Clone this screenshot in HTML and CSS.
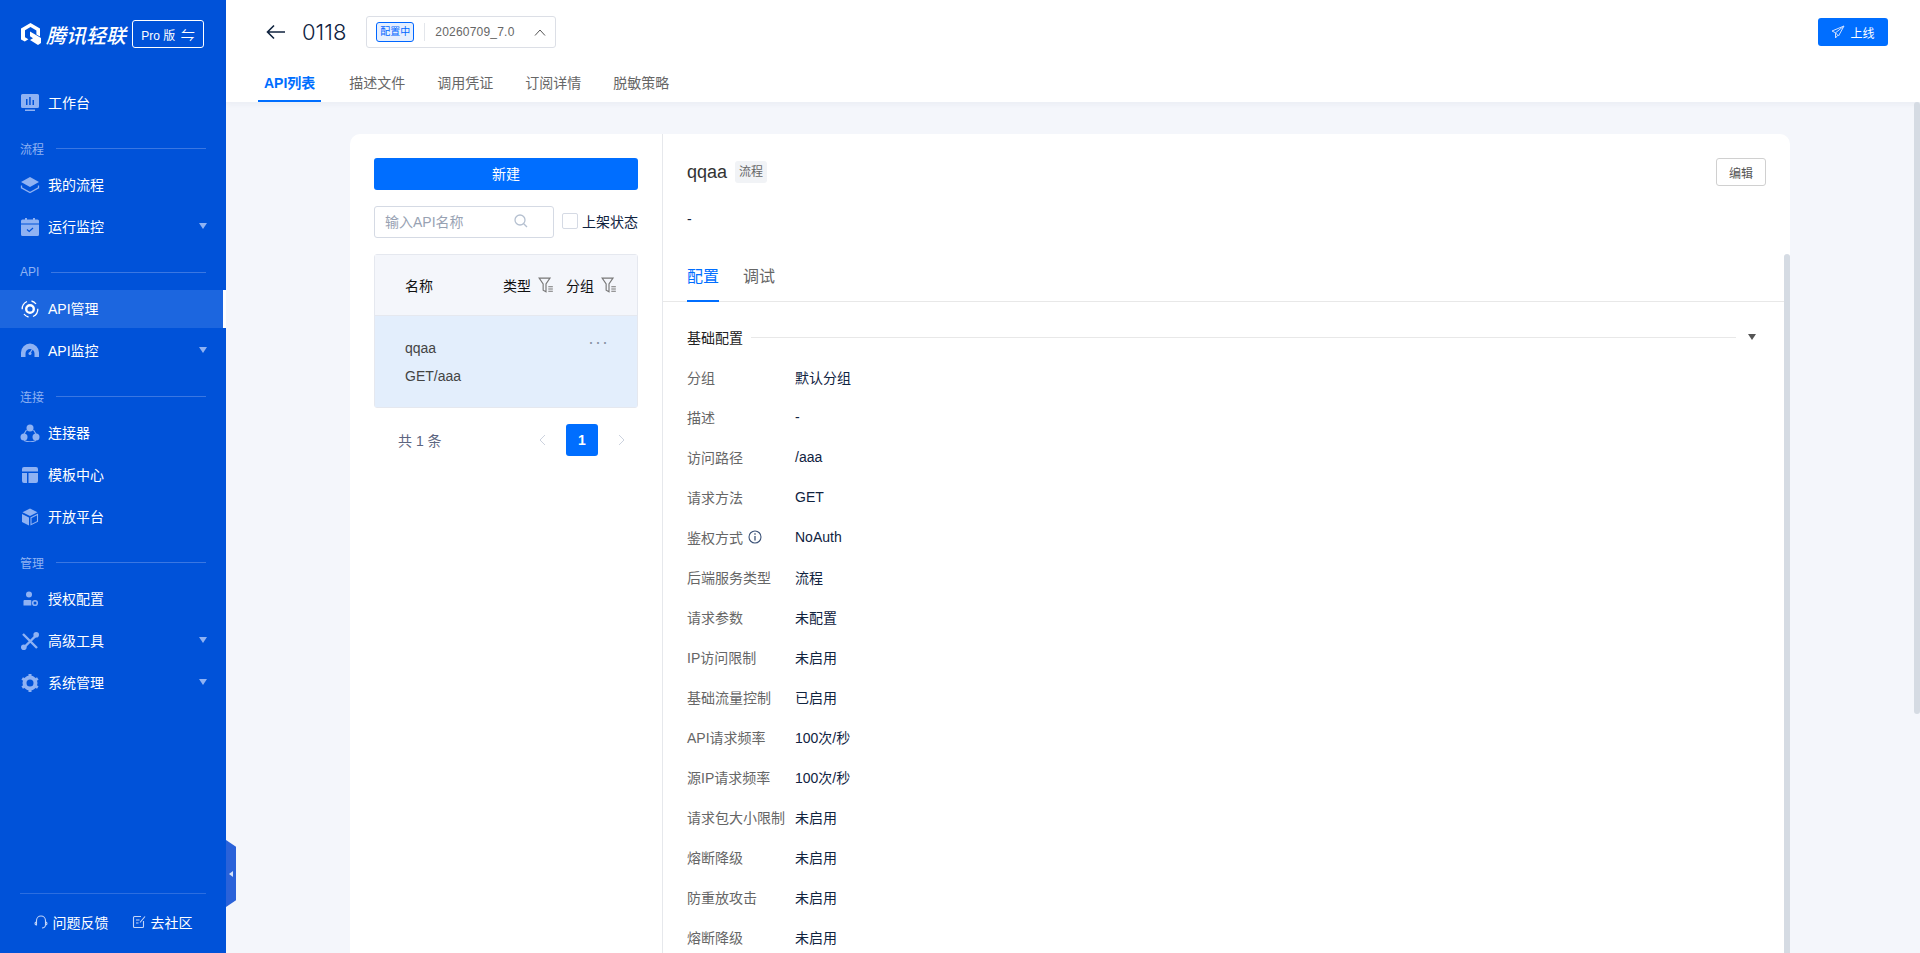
FILE: index.html
```html
<!DOCTYPE html>
<html lang="zh-CN">
<head>
<meta charset="UTF-8">
<title>腾讯轻联</title>
<link rel="stylesheet" href="styles.css">
</head>
<body>
<div class="app">
  <aside class="sidebar">
    <div class="brand">
      <svg class="brand-mark" viewBox="0 0 22 24"><path fill="#fff" d="M10.500 1 20 6.500v8l-3.600-2V8.600L10.500 5 5 8.300v7l3.400 2-3.600 2.200L1 17.400V6.500z"/><path fill="#fff" d="M10 9.500l6 3.500 5 3v5l-3 2-8-5 3-1.800-3-2z"/></svg>
      <span class="brand-name">腾讯轻联</span>
      <button class="pro-btn">Pro 版 <span class="pro-swap">⇋</span></button>
    </div>
    <nav class="nav">
      <a class="nav-item">
        <svg class="nav-icon" viewBox="0 0 18 18"><path fill="#8fb2f3" d="M1.500 0h15A1.500 1.500 0 0 1 18 1.500v11a1.500 1.500 0 0 1-1.500 1.500h-15A1.500 1.500 0 0 1 0 12.500v-11A1.500 1.500 0 0 1 1.500 0zM4 15.500h10V17H4z"/><path fill="#0052d9" d="M5 5h1.500v6H5zM8.200 3h1.500v8H8.200zM11.500 6H13v5h-1.500z"/></svg>
        工作台
      </a>
      <div class="nav-group"><span>流程</span></div>
      <a class="nav-item">
        <svg class="nav-icon" viewBox="0 0 18 18"><path fill="#8fb2f3" d="M9 1 18 6 9 11 0 6z"/><path fill="none" stroke="#8fb2f3" stroke-width="1.300" d="M.5 9.500v2.300L9 16.500l8.500-4.700V9.500"/></svg>
        我的流程
      </a>
      <a class="nav-item">
        <svg class="nav-icon" viewBox="0 0 18 18"><path fill="#8fb2f3" d="M1.500 1.500H4V0h2v1.500h6V0h2v1.500h2.500A1.500 1.500 0 0 1 18 3v13.500a1.500 1.500 0 0 1-1.500 1.500h-15A1.500 1.500 0 0 1 0 16.500V3a1.500 1.500 0 0 1 1.500-1.500z"/><path fill="none" stroke="#0052d9" stroke-width="1.200" d="M0 6h18M6 11.500l2.200 2L12 10"/></svg>
        运行监控
        <i class="caret"></i>
      </a>
      <div class="nav-group"><span>API</span></div>
      <a class="nav-item active">
        <svg class="nav-icon" viewBox="0 0 18 18"><circle cx="9" cy="9" r="3.800" fill="none" stroke="#fff" stroke-width="2.400"/><path fill="none" stroke="#fff" stroke-width="1.300" d="M6 1.500C2.800 3 1 6 1.200 9.300M12 16.500c3.200-1.500 5-4.500 4.800-7.800M7.500 17C5.500 16.500 4 15.500 3 14M10.500 1c2 .4 3.500 1.500 4.500 3"/></svg>
        API管理
      </a>
      <a class="nav-item">
        <svg class="nav-icon" viewBox="0 0 18 18"><path fill="#8fb2f3" d="M9 1.500a9 9 0 0 1 9 9V15h-4.500v-3.500a4.500 4.500 0 1 0-9 0V15H0v-4.500a9 9 0 0 1 9-9z"/><path fill="none" stroke="#8fb2f3" stroke-width="1.300" d="M9 11l2.500-4"/><circle cx="9" cy="11.500" r="1.500" fill="#8fb2f3"/></svg>
        API监控
        <i class="caret"></i>
      </a>
      <div class="nav-group"><span>连接</span></div>
      <a class="nav-item">
        <svg class="nav-icon" viewBox="0 0 20 18"><circle cx="10" cy="4" r="3.500" fill="#8fb2f3"/><circle cx="4" cy="13" r="3.500" fill="#8fb2f3"/><circle cx="16" cy="13" r="3.500" fill="#8fb2f3"/><path fill="none" stroke="#8fb2f3" stroke-width="1.100" d="M6.500 6 4 10M13.500 6l2.500 4M4 16.500c3.500 1.500 8.500 1.500 12 0"/></svg>
        连接器
      </a>
      <a class="nav-item">
        <svg class="nav-icon" viewBox="0 0 18 18"><path fill="#8fb2f3" d="M3 1h12A2 2 0 0 1 17 3v2.500H1V3a2 2 0 0 1 2-2zM1 7h5v10H3a2 2 0 0 1-2-2zM7.500 7H17v8a2 2 0 0 1-2 2H7.500z"/></svg>
        模板中心
      </a>
      <a class="nav-item">
        <svg class="nav-icon" viewBox="0 0 18 18"><path fill="#8fb2f3" d="M9 .5l7.500 3.800L9 8 1.500 4.300zM1 6l7 3.500V17.500L1 14z"/><path fill="none" stroke="#8fb2f3" stroke-width="1.100" d="M10 9.800l6.500-3.300v7L10 16.700z"/></svg>
        开放平台
      </a>
      <div class="nav-group"><span>管理</span></div>
      <a class="nav-item">
        <svg class="nav-icon" viewBox="0 0 18 18"><circle cx="8" cy="4.500" r="3" fill="#8fb2f3"/><path fill="#8fb2f3" d="M3.500 10h6a1 1 0 0 1 .8.500V15.500H2.500v-4.500a1 1 0 0 1 1-1z"/><circle cx="14" cy="13" r="2.300" fill="none" stroke="#8fb2f3" stroke-width="1.600"/></svg>
        授权配置
      </a>
      <a class="nav-item">
        <svg class="nav-icon" viewBox="0 0 18 18"><path fill="none" stroke="#8fb2f3" stroke-width="2.400" d="M2 2l14 14M16 2.500 2.500 16"/><circle cx="2.800" cy="15.200" r="2.800" fill="#8fb2f3"/><circle cx="15.200" cy="2.800" r="2.800" fill="#8fb2f3"/></svg>
        高级工具
        <i class="caret"></i>
      </a>
      <a class="nav-item">
        <svg class="nav-icon" viewBox="0 0 18 18"><circle cx="9" cy="9" r="5.500" fill="none" stroke="#8fb2f3" stroke-width="4"/><path fill="none" stroke="#8fb2f3" stroke-width="3" d="M9 0v3M9 15v3M1.200 4.500l2.600 1.500M14.200 12l2.600 1.500M1.200 13.500l2.600-1.500M14.200 6l2.600-1.500"/></svg>
        系统管理
        <i class="caret"></i>
      </a>
    </nav>
    <div class="side-foot">
      <a class="foot-link">
        <svg class="foot-icon" viewBox="0 0 14 14"><path fill="none" stroke="#c3d5f8" stroke-width="1.100" d="M2.500 7.500V5.500a4.500 4.500 0 0 1 9 0v2M2.500 7c-1 0-1.500.7-1.500 1.500S1.500 10 2.500 10zM11.500 7c1 0 1.500.7 1.500 1.500s-.5 1.500-1.500 1.500zM11.500 10c0 1.500-1.500 3-3.500 3"/></svg>
        问题反馈
      </a>
      <a class="foot-link">
        <svg class="foot-icon" viewBox="0 0 14 14"><path fill="none" stroke="#c3d5f8" stroke-width="1.100" d="M9 1.500H2.500a1 1 0 0 0-1 1v9a1 1 0 0 0 1 1h8a1 1 0 0 0 1-1V6M4 5h3.500M4 8h2.500M8 7.500l5-6"/></svg>
        去社区
      </a>
    </div>
    <div class="collapse-handle"><i></i></div>
  </aside>

  <div class="main">
    <header class="topbar">
      <div class="title-row">
        <svg class="back" viewBox="0 0 20 16"><path fill="none" stroke="#10233f" stroke-width="1.600" d="M19 8H1.500M8 1.500 1.500 8 8 14.500"/></svg>
        <span class="app-name">0118</span>
        <div class="version">
          <span class="version-tag">配置中</span>
          <span class="version-no">20260709_7.0</span>
          <svg class="version-arrow" viewBox="0 0 12 7"><path fill="none" stroke="#555" stroke-width="1" d="M1 6.500 6 1l5 5.500"/></svg>
        </div>
        <button class="online-btn">
          <svg class="online-icon" viewBox="0 0 14 14"><path fill="none" stroke="#cfe0ff" stroke-width="1" d="M13 1 1 6l3.500 1.800L13 1l-5.500 10-3-3.200L4.500 13l2.200-2.700"/></svg>
          上线
        </button>
      </div>
      <div class="top-tabs">
        <a class="top-tab active">API列表</a>
        <a class="top-tab">描述文件</a>
        <a class="top-tab">调用凭证</a>
        <a class="top-tab">订阅详情</a>
        <a class="top-tab">脱敏策略</a>
      </div>
    </header>

    <div class="content">
      <div class="card">
        <section class="api-list">
          <button class="new-btn">新建</button>
          <div class="filter-row">
            <div class="search">
              <span>输入API名称</span>
              <svg class="search-icon" viewBox="0 0 14 14"><circle cx="6" cy="6" r="5" fill="none" stroke="#b5c0d0" stroke-width="1.300"/><path stroke="#b5c0d0" stroke-width="1.300" d="M9.700 9.700 13 13"/></svg>
            </div>
            <label class="check"><i></i>上架状态</label>
          </div>
          <div class="api-table">
            <div class="api-head">
              <span class="col-name">名称</span>
              <span class="col-filter">类型
                <svg class="filter-icon" viewBox="0 0 14 14"><path fill="none" stroke="#777" stroke-width="1" d="M1 1h9.500L7 6v7L4.500 11.500V6z"/><path stroke="#777" d="M9 8.500h4M9 10.500h4M9 12.500h4"/></svg>
              </span>
              <span class="col-filter">分组
                <svg class="filter-icon" viewBox="0 0 14 14"><path fill="none" stroke="#777" stroke-width="1" d="M1 1h9.500L7 6v7L4.500 11.500V6z"/><path stroke="#777" d="M9 8.500h4M9 10.500h4M9 12.500h4"/></svg>
              </span>
            </div>
            <div class="api-row">
              <div>
                <div class="api-name">qqaa</div>
                <div class="api-path">GET/aaa</div>
              </div>
              <span class="more">···</span>
            </div>
          </div>
          <div class="pager">
            <span class="total">共 1 条</span>
            <svg class="page-arrow" viewBox="0 0 7 12"><path fill="none" stroke="#ccd2de" stroke-width="1" d="M6 1 1 6l5 5"/></svg>
            <span class="page-num">1</span>
            <svg class="page-arrow" viewBox="0 0 7 12"><path fill="none" stroke="#ccd2de" stroke-width="1" d="m1 1 5 5-5 5"/></svg>
          </div>
        </section>

        <section class="detail">
          <div class="detail-head">
            <span class="detail-name">qqaa</span>
            <span class="detail-tag">流程</span>
            <button class="edit-btn">编辑</button>
          </div>
          <div class="detail-desc">-</div>
          <div class="detail-tabs">
            <a class="detail-tab active">配置</a>
            <a class="detail-tab">调试</a>
          </div>
          <div class="section-title">
            <span>基础配置</span>
            <i class="section-line"></i>
            <i class="section-caret"></i>
          </div>
          <dl class="fields">
            <div class="field"><dt>分组</dt><dd>默认分组</dd></div>
            <div class="field"><dt>描述</dt><dd>-</dd></div>
            <div class="field"><dt>访问路径</dt><dd>/aaa</dd></div>
            <div class="field"><dt>请求方法</dt><dd>GET</dd></div>
            <div class="field"><dt>鉴权方式 <svg class="info" viewBox="0 0 14 14"><circle cx="7" cy="7" r="6" fill="none" stroke="#3c5378" stroke-width="1.100"/><path stroke="#3c5378" stroke-width="1.300" d="M7 6v4.500M7 3.300v1.400"/></svg></dt><dd>NoAuth</dd></div>
            <div class="field"><dt>后端服务类型</dt><dd>流程</dd></div>
            <div class="field"><dt>请求参数</dt><dd>未配置</dd></div>
            <div class="field"><dt>IP访问限制</dt><dd>未启用</dd></div>
            <div class="field"><dt>基础流量控制</dt><dd>已启用</dd></div>
            <div class="field"><dt>API请求频率</dt><dd>100次/秒</dd></div>
            <div class="field"><dt>源IP请求频率</dt><dd>100次/秒</dd></div>
            <div class="field"><dt>请求包大小限制</dt><dd>未启用</dd></div>
            <div class="field"><dt>熔断降级</dt><dd>未启用</dd></div>
            <div class="field"><dt>防重放攻击</dt><dd>未启用</dd></div>
            <div class="field"><dt>熔断降级</dt><dd>未启用</dd></div>
          </dl>
          <i class="inner-scroll"></i>
        </section>
      </div>
    </div>
    <i class="page-scroll"></i>
  </div>
</div>
</body>
</html>
```

FILE: styles.css
```css
* { box-sizing: border-box; }
html, body { height: 100%; }
body {
  margin: 0;
  overflow: hidden;
  font-family: "Liberation Sans", "Noto Sans CJK SC", sans-serif;
  font-size: 14px;
  color: #10233f;
  background: #f4f6fb;
}
.app { display: flex; height: 953px; }

/* sidebar */
.sidebar {
  position: relative;
  flex: 0 0 226px;
  display: flex;
  flex-direction: column;
  background: #0052d9;
  color: #fff;
}
.brand {
  display: flex;
  align-items: center;
  height: 68px;
  padding: 0 0 0 20px;
}
.brand-mark { width: 22px; height: 24px; }
.brand-name {
  margin-left: 4px;
  font-size: 20px;
  font-weight: 500;
  font-style: italic;
  white-space: nowrap;
}
.pro-btn {
  width: 72px;
  height: 28px;
  margin-left: 6px;
  padding: 0;
  background: transparent;
  border: 1px solid #fff;
  border-radius: 3px;
  color: #fff;
  font: inherit;
  font-size: 12px;
}
.pro-swap { font-size: 14px; margin-left: 2px; }
.nav { padding-top: 16px; }
.nav-item {
  position: relative;
  display: flex;
  align-items: center;
  height: 38px;
  margin-bottom: 4px;
  padding-left: 20px;
  font-size: 14px;
  line-height: 38px;
}
.nav-item.active { background: #1c66df; border-right: 3px solid #fff; }
.nav-icon { width: 20px; height: 18px; margin-right: 8px; flex: none; }
.caret {
  position: absolute;
  right: 19px;
  top: 15px;
  border-left: 4px solid transparent;
  border-right: 4px solid transparent;
  border-top: 6px solid #8fb2f3;
}
.nav-group {
  display: flex;
  align-items: center;
  gap: 12px;
  height: 18px;
  margin: 17px 20px 9px;
  color: #8fb2f3;
  font-size: 12px;
}
.nav-group::after {
  content: "";
  flex: 1;
  height: 1px;
  background: #3a77e2;
}
.side-foot {
  display: flex;
  justify-content: center;
  align-items: center;
  gap: 23px;
  height: 60px;
  margin: auto 20px 0;
  padding: 0 0 3px 0;
  border-top: 1px solid #2c6ee0;
  font-size: 14px;
}
.foot-link { display: flex; align-items: center; gap: 5px; white-space: nowrap; }
.foot-icon { width: 14px; height: 14px; }
.collapse-handle {
  position: absolute;
  left: 226px;
  top: 840px;
  width: 10px;
  height: 67px;
  display: flex;
  align-items: center;
  justify-content: center;
  background: #2a62d9;
  border-radius: 0 5px 5px 0;
  clip-path: polygon(0 0, 100% 10%, 100% 90%, 0 100%);
  z-index: 5;
}
.collapse-handle i {
  border-top: 3px solid transparent;
  border-bottom: 3px solid transparent;
  border-right: 4px solid #d5e2fa;
}

/* top bar */
.main { position: relative; flex: 1; min-width: 0; display: flex; flex-direction: column; }
.topbar {
  height: 102px;
  padding: 0 32px 0 40px;
  background: #fff;
  box-shadow: 0 2px 6px rgba(30, 50, 90, .05);
  z-index: 2;
}
.title-row { display: flex; align-items: center; height: 64px; }
.back { width: 20px; height: 16px; margin-right: 16px; }
.app-name { font-size: 22px; font-family: Inter, "Liberation Sans", sans-serif; font-weight: 300; }
.version {
  display: flex;
  align-items: center;
  width: 190px;
  height: 32px;
  margin-left: 20px;
  padding: 0 9px;
  border: 1px solid #dcdfe6;
  border-radius: 3px;
}
.version-tag {
  width: 38px;
  height: 20px;
  margin-right: 10px;
  border: 1px solid #0066ff;
  border-radius: 3px;
  background: #e5efff;
  color: #0066ff;
  font-size: 10px;
  line-height: 18px;
  text-align: center;
}
.version-no {
  flex: 1;
  padding-left: 10px;
  border-left: 1px solid #e3e6eb;
  color: #666;
  font-size: 12px;
  letter-spacing: .2px;
  line-height: 18px;
}
.version-arrow { width: 12px; height: 7px; }
.online-btn {
  display: flex;
  align-items: center;
  justify-content: center;
  gap: 5px;
  width: 70px;
  height: 28px;
  margin-left: auto;
  padding: 0;
  border: none;
  border-radius: 3px;
  background: #006eff;
  color: #fff;
  font: inherit;
  font-size: 12px;
}
.online-icon { width: 14px; height: 14px; }
.top-tabs { display: flex; gap: 20px; height: 38px; margin-left: -8px; }
.top-tab {
  padding: 0 6px;
  height: 38px;
  line-height: 38px;
  color: #666;
  font-size: 14px;
}
.top-tab.active {
  margin-right: 2px;
  color: #006eff;
  font-weight: 700;
  border-bottom: 2px solid #006eff;
}

/* card */
.content { flex: 1; overflow: hidden; padding: 32px 0 0 124px; }
.card {
  display: flex;
  width: 1440px;
  height: 1000px;
  background: #fff;
  border-radius: 10px;
}
.api-list { flex: 0 0 313px; padding: 24px 24px 0; border-right: 1px solid #e6e8ec; }
.new-btn {
  display: block;
  width: 264px;
  height: 32px;
  padding: 0 0 2px;
  border: none;
  border-radius: 3px;
  background: #006eff;
  color: #fff;
  font: inherit;
  font-size: 14px;
}
.filter-row { display: flex; align-items: center; margin-top: 16px; white-space: nowrap; }
.search {
  display: flex;
  align-items: center;
  justify-content: space-between;
  width: 180px;
  height: 32px;
  padding: 0 25px 2px 10px;
  border: 1px solid #d5dae4;
  border-radius: 3px;
  color: #98a2b3;
  font-size: 14px;
}
.search-icon { width: 14px; height: 14px; }
.check { display: flex; align-items: center; margin-left: 8px; padding-bottom: 2px; font-size: 14px; color: #10233f; }
.check i {
  width: 16px;
  height: 16px;
  margin-right: 4px;
  border: 1px solid #d5dae4;
  border-radius: 2px;
}
.api-table {
  margin-top: 16px;
  border: 1px solid #e5e8ef;
  border-radius: 3px;
}
.api-head {
  display: flex;
  align-items: center;
  height: 61px;
  padding: 0 8px 0 30px;
  background: #f4f6fb;
  border-bottom: 1px solid #e5e8ef;
  color: #111;
}
.col-name { flex: 1; }
.col-filter { display: flex; align-items: center; gap: 7px; width: 63px; white-space: nowrap; }
.filter-icon { width: 16px; height: 16px; }
.api-row {
  display: flex;
  justify-content: space-between;
  height: 91px;
  padding: 20px 30px;
  background: #e3eefc;
  color: #444;
}
.api-name { line-height: 24px; }
.api-path { margin-top: 4px; line-height: 24px; }
.more { margin: -6px -2px 0 0; color: #8a93a5; font-size: 18px; letter-spacing: 1px; line-height: 24px; }
.pager { display: flex; align-items: center; height: 32px; margin-top: 16px; padding-left: 24px; }
.total { flex: 1; color: #5c6580; font-size: 14px; }
.page-arrow { width: 7px; height: 12px; }
.page-num {
  width: 32px;
  height: 32px;
  margin: 0 20px;
  border-radius: 3px;
  background: #006eff;
  color: #fff;
  font-weight: 700;
  line-height: 32px;
  text-align: center;
}
.pager .page-arrow:last-child { margin-right: 13px; }

/* detail */
.detail { position: relative; flex: 1; }
.detail-head { display: flex; align-items: center; height: 28px; margin: 24px 24px 0; }
.detail-name { font-size: 18px; color: #333; }
.detail-tag {
  margin-left: 8px;
  padding: 0 4px;
  height: 22px;
  border-radius: 3px;
  background: #f1f3f6;
  color: #666;
  font-size: 12px;
  line-height: 22px;
}
.edit-btn {
  width: 50px;
  height: 28px;
  margin-left: auto;
  padding: 0;
  border: 1px solid #d0d0d0;
  border-radius: 3px;
  background: #fff;
  color: #555;
  font: inherit;
  font-size: 12px;
}
.detail-desc { margin: 23px 24px 0; line-height: 20px; }
.detail-tabs {
  display: flex;
  gap: 24px;
  height: 49px;
  margin-top: 24px;
  margin-right: 6px;
  padding: 0 24px;
  border-bottom: 1px solid #e8e8e8;
}
.detail-tab { height: 49px; padding-top: 9px; color: #666; font-size: 16px; line-height: 30px; }
.detail-tab.active { color: #006eff; border-bottom: 2px solid #006eff; }
.section-title {
  display: flex;
  align-items: center;
  gap: 8px;
  margin: 25px 34px 0 24px;
  height: 20px;
  font-size: 14px;
  color: #222;
}
.section-line { flex: 1; height: 1px; background: #e8e8e8; }
.section-caret {
  margin-left: 4px;
  border-left: 4px solid transparent;
  border-right: 4px solid transparent;
  border-top: 6px solid #555;
}
.fields { margin: 10px 24px 0; }
.field { display: flex; align-items: center; height: 40px; }
.field dt { flex: 0 0 108px; display: flex; align-items: center; gap: 5px; color: #666; white-space: nowrap; }
.field dd { margin: 0; color: #10233f; }
.info { width: 14px; height: 14px; }
.inner-scroll {
  position: absolute;
  right: 0;
  top: 120px;
  bottom: 0;
  width: 6px;
  border-radius: 3px 3px 0 0;
  background: #d5dbe3;
}
.page-scroll {
  position: absolute;
  right: 0;
  top: 102px;
  width: 6px;
  height: 612px;
  border-radius: 3px;
  background: #d5dbe3;
  z-index: 3;
}
```
